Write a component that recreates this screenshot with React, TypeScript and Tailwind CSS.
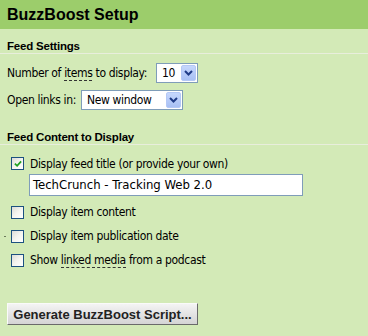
import { useState } from "react";

const body = { fontFamily: '"DejaVu Sans Condensed", "DejaVu Sans", sans-serif' };
const sans = { fontFamily: '"Liberation Sans", Arial, sans-serif' };

function Chevron() {
  return (
    <svg viewBox="0 0 9 6" className="w-[9px] h-[6px]">
      <path d="M1 1 L4.5 4.5 L8 1" fill="none" stroke="#1f3b87" strokeWidth="2" />
    </svg>
  );
}

function Select({ value, width }: { value: string; width: string }) {
  return (
    <div
      className={`flex items-center h-[20px] bg-white border border-[#7f9db9] pl-[5px] pr-[1px] ${width}`}
    >
      <span className="flex-1 text-[12px] leading-none text-black">{value}</span>
      <span className="flex items-center justify-center w-[15px] h-[16px] rounded-[2px] border border-[#b4c8f6] bg-gradient-to-b from-[#c6d7fd] to-[#a8c0f4]">
        <Chevron />
      </span>
    </div>
  );
}

function Checkbox({ checked }: { checked: boolean }) {
  return (
    <span className="flex items-center justify-center w-[13px] h-[13px] border border-[#1c5180] bg-gradient-to-br from-[#dcdcd7] via-[#f4f4f0] to-white">
      {checked && (
        <svg viewBox="0 0 9 9" className="w-[8px] h-[8px]">
          <path d="M1 4 L3.5 6.5 L8 1.5" fill="none" stroke="#21a121" strokeWidth="2" />
        </svg>
      )}
    </span>
  );
}

function CheckRow({
  label,
  checked,
  dot,
  height = "h-[24px]",
}: {
  label: React.ReactNode;
  checked: boolean;
  dot?: boolean;
  height?: string;
}) {
  return (
    <div className={`flex items-center ${height}`}>
      {dot ? (
        <span className="w-[2px] h-[1px] ml-[4px] mr-[5px] bg-[#6b7a5a]" />
      ) : (
        <span className="w-[11px]" />
      )}
      <Checkbox checked={checked} />
      <span className="ml-[6px]">{label}</span>
    </div>
  );
}

function SectionTitle({ children }: { children: React.ReactNode }) {
  return (
    <div
      className="px-[7px] border-b border-[#e8eedc] font-bold text-[11.5px] tracking-[-0.2px] leading-[14px]"
      style={sans}
    >
      {children}
    </div>
  );
}

export default function App() {
  const [title] = useState("TechCrunch - Tracking Web 2.0");

  return (
    <div
      className="w-[368px] h-[336px] bg-[#d3eab7] text-black text-[12px] tracking-[-0.35px]"
      style={body}
    >
      <div className="h-[29px] bg-[#9ccd6b] flex items-center px-[7px] tracking-normal" style={sans}>
        <h1 className="font-bold text-[16px] leading-none">BuzzBoost Setup</h1>
      </div>

      <div className="pt-[10px]">
        <SectionTitle>Feed Settings</SectionTitle>

        <div className="px-[7px] pt-[9px]">
          <div className="flex items-center h-[20px] gap-[9px]">
            <span>
              Number of{" "}
              <span className="border-b border-dashed border-[#333]">items</span> to display:
            </span>
            <Select value="10" width="w-[42px]" />
          </div>
          <div className="flex items-center h-[20px] gap-[5px] mt-[7px]">
            <span>Open links in:</span>
            <Select value="New window" width="w-[102px]" />
          </div>
        </div>

        <div className="pt-[20px]">
          <SectionTitle>Feed Content to Display</SectionTitle>
        </div>

        <div className="pt-[8px]">
          <CheckRow checked height="h-[21px]" label="Display feed title (or provide your own)" />
          <div className="pl-[29px] pb-[4px]">
            <div className="w-[274px] h-[22px] bg-white border border-[#7f9db9] flex items-center px-[3px] text-[13px] tracking-normal">
              {title}
            </div>
          </div>
          <CheckRow checked={false} label="Display item content" />
          <CheckRow checked={false} dot label="Display item publication date" />
          <CheckRow
            checked={false}
            label={
              <>
                Show{" "}
                <span className="border-b border-dashed border-[#333]">linked media</span> from a
                podcast
              </>
            }
          />
        </div>

        <div className="px-[7px] pt-[31px]">
          <button
            className="h-[22px] w-[191px] bg-gradient-to-b from-[#f4f4f4] to-[#d4d4d4] border border-t-[#fafafa] border-l-[#fafafa] border-r-[#6a6a6a] border-b-[#6a6a6a] font-bold text-[13px] tracking-normal text-[#222] leading-none"
            style={sans}
          >
            Generate BuzzBoost Script...
          </button>
        </div>
      </div>
    </div>
  );
}
